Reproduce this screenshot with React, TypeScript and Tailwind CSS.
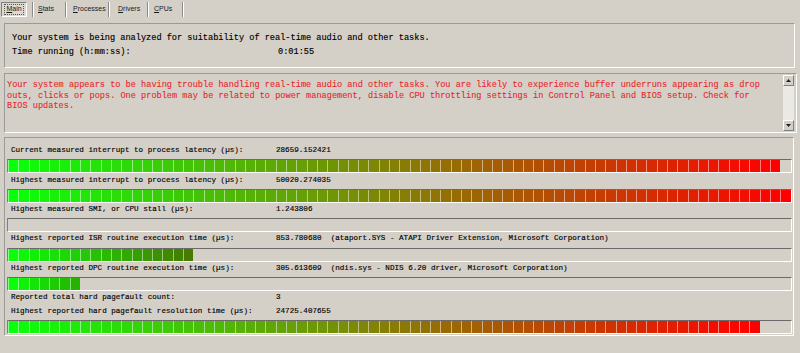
import React from "react";

type RGB = [number, number, number];

const lerp = (a: RGB, b: RGB, t: number): RGB => [
  Math.round(a[0] + (b[0] - a[0]) * t),
  Math.round(a[1] + (b[1] - a[1]) * t),
  Math.round(a[2] + (b[2] - a[2]) * t),
];

const TOTAL = 76;

function colorFor(kind: string, i: number, n: number): string {
  const t = n > 1 ? i / (n - 1) : 0;
  let c: RGB;
  if (kind === "full") {
    c = lerp([10, 255, 10], [255, 0, 0], t);
  } else if (kind === "isr") {
    c = lerp([10, 255, 10], [70, 122, 0], t);
  } else {
    c = lerp([10, 255, 10], [38, 178, 0], t);
  }
  return `rgb(${c[0]},${c[1]},${c[2]})`;
}

function Bar({ filled, kind }: { filled: number; kind: string }) {
  const segs = [];
  for (let i = 0; i < TOTAL; i++) {
    segs.push(
      <div
        key={i}
        className={
          i < filled
            ? "flex-1 basis-0 border-l border-l-white/50"
            : "flex-1 basis-0 border-l border-l-transparent"
        }
        style={i < filled ? { backgroundColor: colorFor(kind, i, filled) } : undefined}
      />
    );
  }
  return (
    <div className="mt-[2px] flex h-[14px] border-t border-l border-t-[#6a6a6a] border-l-[#808080] border-b border-r border-b-white border-r-white">
      {segs}
    </div>
  );
}

function Label({ label, value }: { label: string; value: string }) {
  return (
    <div className="flex h-[13.4px] items-center pl-[4px] text-[7.6px] leading-[13px] whitespace-pre text-black [-webkit-text-stroke:0.15px_#000]">
      <span className="w-[265px] shrink-0">{label}</span>
      <span>{value}</span>
    </div>
  );
}

function Sep() {
  return <div className="h-[15px] w-[2px] border-l border-l-[#8a8a8a] border-r border-r-white" />;
}

function U({ c, rest }: { c: string; rest: string }) {
  return (
    <span>
      <span className="underline underline-offset-[1px]">{c}</span>
      {rest}
    </span>
  );
}

export default function App() {
  const mono = { fontFamily: '"Liberation Mono", "Courier New", monospace' };
  return (
    <div className="relative h-[353px] w-[800px] overflow-hidden bg-[#d4d0c8]" style={mono}>
      {/* toolbar */}
      <div
        className="flex h-[18px] items-center pt-[1px] text-[7px] text-[#1a1a1a]"
        style={{ fontFamily: '"Liberation Sans", Arial, sans-serif' }}
      >
        <div className="ml-[1px] flex h-[15px] w-[26px] items-center justify-center border border-t-[#808080] border-l-[#808080] border-b-white border-r-white bg-[#dcd9d2]">
          <div className="flex h-[11px] w-[20px] items-center justify-center border border-dotted border-[#555]">
            <U c="M" rest="ain" />
          </div>
        </div>
        <div className="w-[5px]" />
        <Sep />
        <div className="w-[31px] pl-[4px]">
          <U c="S" rest="tats" />
        </div>
        <Sep />
        <div className="w-[41px] pl-[6px]">
          <U c="P" rest="rocesses" />
        </div>
        <Sep />
        <div className="w-[37px] pl-[8px]">
          <U c="D" rest="rivers" />
        </div>
        <Sep />
        <div className="w-[33px] pl-[5px]">
          <U c="C" rest="PUs" />
        </div>
        <Sep />
      </div>

      {/* panel 1 */}
      <div className="ml-[4px] mt-[5px] h-[45px] w-[791px] border border-t-[#9a9a9a] border-l-[#9a9a9a] border-b-white border-r-white pl-[7px] pt-[8px] text-[8.6px] leading-[13.6px] text-black [-webkit-text-stroke:0.15px_#000]">
        <div className="whitespace-pre">Your system is being analyzed for suitability of real-time audio and other tasks.</div>
        <div className="flex whitespace-pre">
          <span className="w-[266px] shrink-0">Time running (h:mm:ss):</span>
          <span>0:01:55</span>
        </div>
      </div>

      {/* panel 2 */}
      <div className="ml-[4px] mt-[5px] flex h-[60px] w-[793px] border border-t-[#9a9a9a] border-l-[#9a9a9a] border-b-white border-r-white">
        <div className="flex-1 pl-[2px] pt-[6px] text-[8.6px] leading-[10.5px] whitespace-pre text-[#e8262a] [-webkit-text-stroke:0.1px_#e8262a]">
          Your system appears to be having trouble handling real-time audio and other tasks. You are likely to experience buffer underruns appearing as drop
          <br />
          outs, clicks or pops. One problem may be related to power management, disable CPU throttling settings in Control Panel and BIOS setup. Check for
          <br />
          BIOS updates.
        </div>
        <div className="mr-[2px] mt-[1px] mb-[1px] flex w-[11px] flex-col bg-[#ebe9e4]">
          <div className="flex h-[11px] items-center justify-center border border-t-white border-l-white border-b-[#808080] border-r-[#808080] bg-[#d4d0c8]">
            <svg width="5" height="3" viewBox="0 0 5 3">
              <path d="M2.5 0 L5 3 L0 3 Z" fill="#222" />
            </svg>
          </div>
          <div className="flex-1" />
          <div className="flex h-[11px] items-center justify-center border border-t-white border-l-white border-b-[#808080] border-r-[#808080] bg-[#d4d0c8]">
            <svg width="5" height="3" viewBox="0 0 5 3">
              <path d="M0 0 L5 0 L2.5 3 Z" fill="#222" />
            </svg>
          </div>
        </div>
      </div>

      {/* panel 3 */}
      <div className="ml-[4px] mt-[4px] h-[199px] w-[790px] border border-t-[#9a9a9a] border-l-[#9a9a9a] border-b-white border-r-white pl-[2px] pr-[1px] pt-[6px]">
        <Label label="Current measured interrupt to process latency (µs):" value="28659.152421" />
        <Bar filled={75} kind="full" />
        <Label label="Highest measured interrupt to process latency (µs):" value="50020.274035" />
        <Bar filled={76} kind="full" />
        <Label label="Highest measured SMI, or CPU stall (µs):" value="1.243806" />
        <Bar filled={0} kind="full" />
        <Label
          label="Highest reported ISR routine execution time (µs):"
          value="853.780680  (ataport.SYS - ATAPI Driver Extension, Microsoft Corporation)"
        />
        <Bar filled={18} kind="isr" />
        <Label
          label="Highest reported DPC routine execution time (µs):"
          value="305.613609  (ndis.sys - NDIS 6.20 driver, Microsoft Corporation)"
        />
        <Bar filled={7} kind="dpc" />
        <Label label="Reported total hard pagefault count:" value="3" />
        <Label label="Highest reported hard pagefault resolution time (µs):" value="24725.407655" />
        <Bar filled={73} kind="full" />
      </div>
    </div>
  );
}
